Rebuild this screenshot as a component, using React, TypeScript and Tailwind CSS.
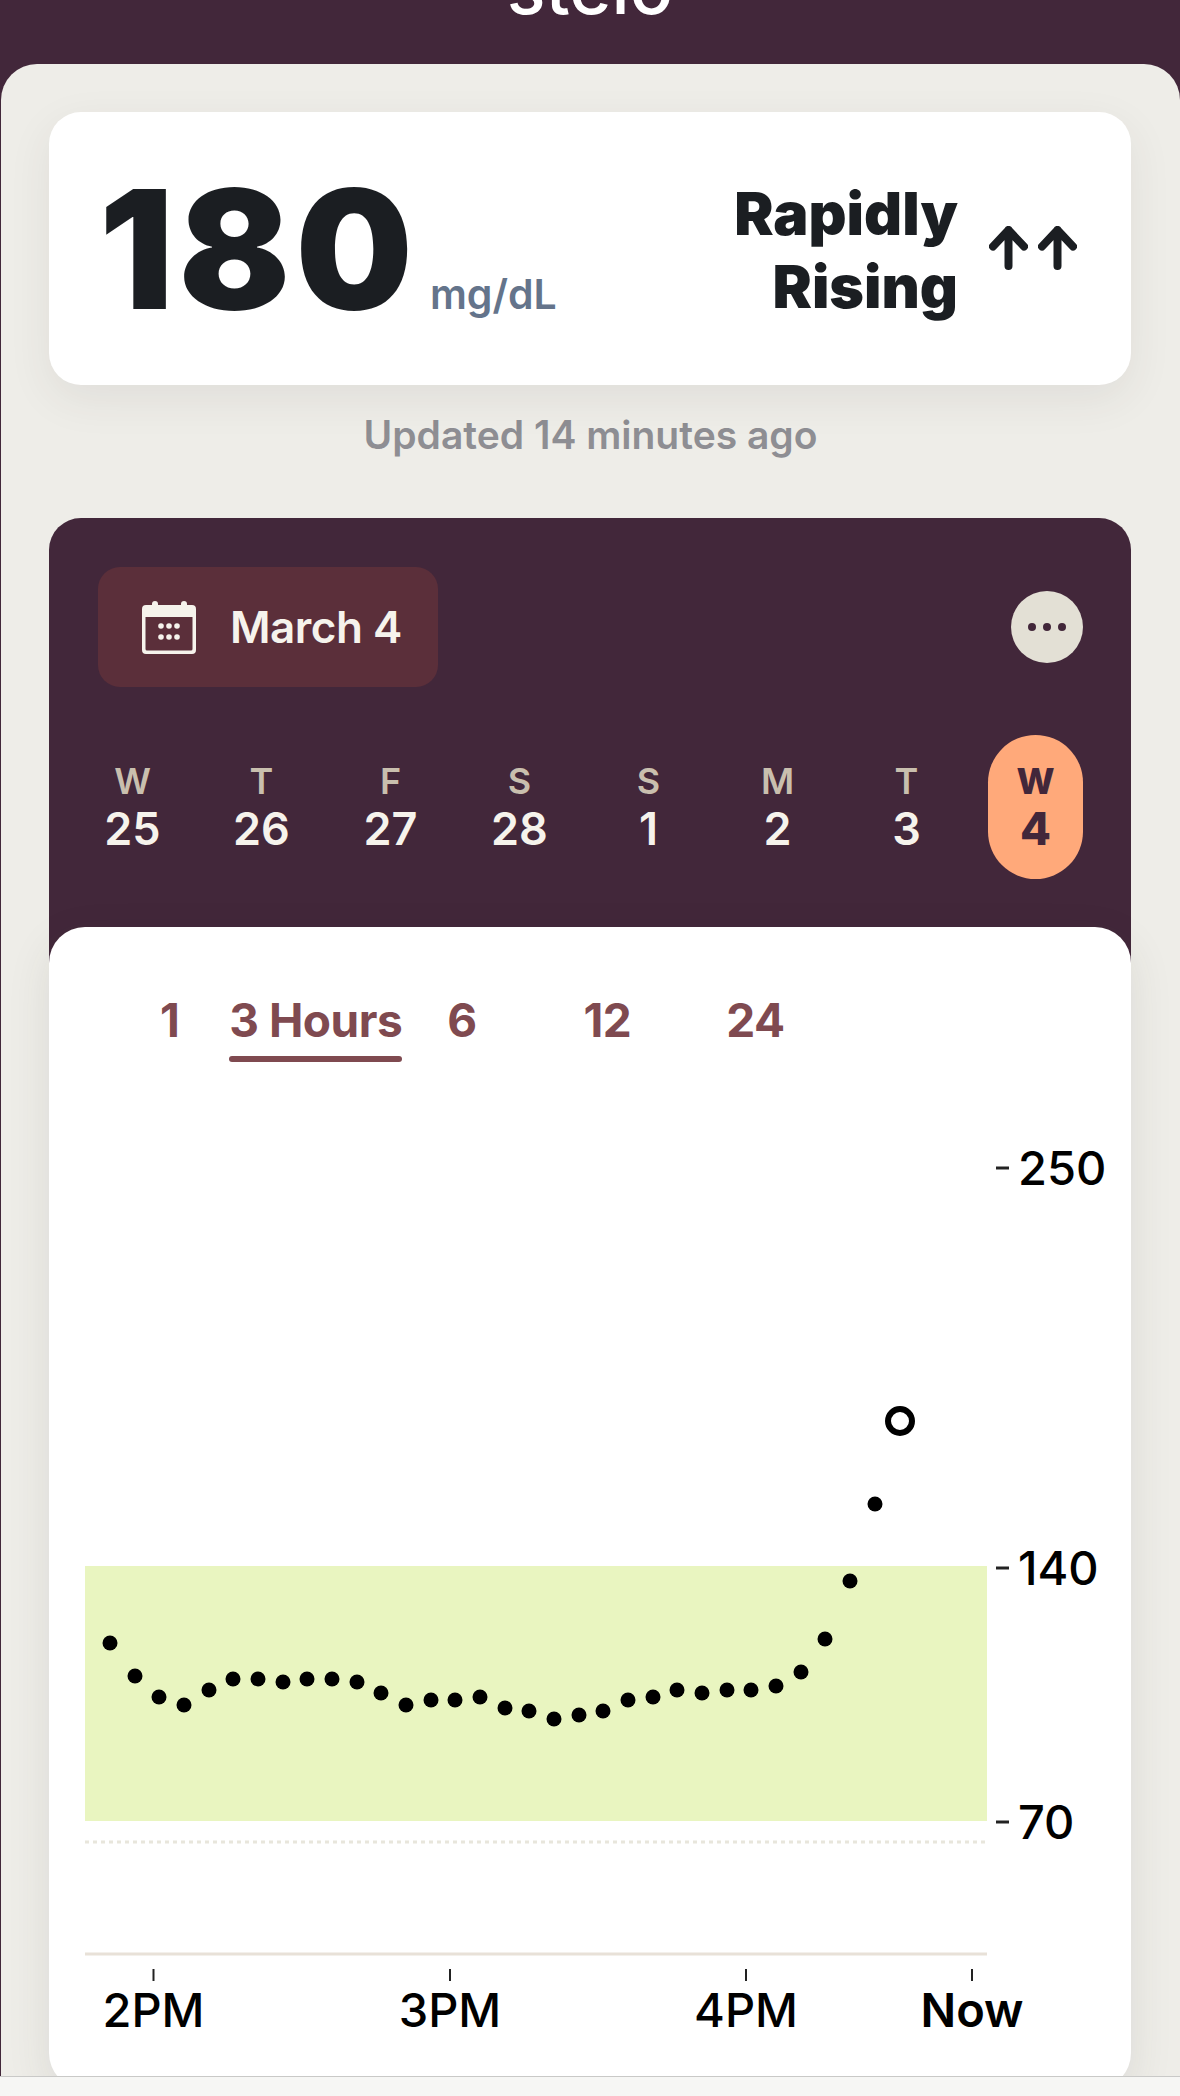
const dots: [number, number][] = [
  [110,1643],[135,1676],[159,1697],[184,1705],[209,1690],[233,1679],[258,1679],[283,1682],[307,1679],[332,1679],[357,1682],[381,1693],[406,1705],[431,1700],[455,1700],[480,1697],[505,1708],[529,1711],[554,1719],[579,1715],[603,1711],[628,1700],[653,1697],[677,1690],[702,1693],[727,1690],[751,1690],[776,1686],[801,1672],[825,1639],[850,1581],[875,1504],
];
const days = [
  ["W","25"],["T","26"],["F","27"],["S","28"],["S","1"],["M","2"],["T","3"],
];
const ORIGIN_X = 49;
const ORIGIN_Y = 1100;
const yLabels: [string, number][] = [["250",1168],["140",1568],["70",1822]];
const xLabels: [string, number, string][] = [["2PM",153.5,"font-medium"],["3PM",450,"font-medium"],["4PM",746,"font-medium"],["Now",972,"font-semibold"]];

function Arrow() {
  return (
    <svg width="39" height="44" viewBox="0 0 39 44" fill="none" stroke="#1b1e22" strokeWidth="8" strokeLinecap="round" strokeLinejoin="round">
      <path d="M19.500 4V40M4 20.500L19.500 4L35 20.500" />
    </svg>
  );
}

export default function App() {
  return (
    <div className="w-[1180px] h-[2096px] overflow-hidden bg-[#42273a] flex flex-col font-['Inter',sans-serif]">
      <header className="h-[64px] shrink-0 relative overflow-hidden">
        <div className="absolute left-0 right-0 bottom-[40px] text-center text-white text-[72px] leading-[72px] font-medium">stelo</div>
      </header>
      <main className="flex-1 min-h-0 ml-[1px] rounded-t-[36px] bg-[#eeede8] px-[48px] pt-[48px] flex flex-col overflow-hidden">
        <section className="h-[273px] w-[1082px] shrink-0 rounded-[32px] bg-white shadow-[0_14px_44px_rgba(60,55,45,0.08)] flex items-start relative">
          <div className="flex items-baseline pl-[50px] pt-[55px]">
            <span className="text-[165px] leading-[165px] font-black text-[#1b1e22] tracking-[5px]">180</span>
            <span className="ml-[12px] text-[41px] leading-none font-semibold text-[#64748b]">mg/dL</span>
          </div>
          <div className="ml-auto flex items-center pr-[54px] pt-[65px]">
            <div className="text-right text-[59px] leading-[73px] font-black text-[#1b1e22]">
              <div>Rapidly</div>
              <div>Rising</div>
            </div>
            <div className="flex ml-[31px] mt-[-4px] gap-[10px]">
              <Arrow />
              <Arrow />
            </div>
          </div>
        </section>
        <p className="mt-[28px] h-[44px] text-center text-[39px] leading-[44px] font-semibold text-[#8e8e93] shrink-0">Updated 14 minutes ago</p>
        <section className="mt-[61px] w-[1082px] shrink-0 flex flex-col">
          <div className="rounded-t-[32px] bg-[#42273a] pb-[84px] flex flex-col">
            <div className="flex items-center justify-between pl-[49px] pr-[48px] pt-[49px] shrink-0">
              <button className="h-[120px] w-[340px] rounded-[22px] bg-[#5b2f3a] flex items-center pl-[44px] text-[#f6f3ec]">
                <svg width="54" height="54" viewBox="0 0 54 54" fill="#f6f3ec">
                  <path fillRule="evenodd" d="M10 4a3 3 0 0 1 6 0v1h23V4a3 3 0 0 1 6 0v1h5a4 4 0 0 1 4 4v41a4 4 0 0 1-4 4H4a4 4 0 0 1-4-4V9a4 4 0 0 1 4-4h6zM3.500 17v32a1.500 1.500 0 0 0 1.500 1.500h44a1.500 1.500 0 0 0 1.500-1.500V17z" />
                  <circle cx="19" cy="26" r="2.800" /><circle cx="27" cy="26" r="2.800" /><circle cx="35" cy="26" r="2.800" />
                  <circle cx="19" cy="37" r="2.800" /><circle cx="27" cy="37" r="2.800" /><circle cx="35" cy="37" r="2.800" />
                </svg>
                <span className="ml-[34px] text-[44px] leading-none font-semibold tracking-[-0.5px]">March 4</span>
              </button>
              <div className="w-[72px] h-[72px] rounded-full bg-[#e3e0d5] flex items-center justify-center gap-[7px]">
                <span className="w-[8px] h-[8px] rounded-full bg-[#42273a]" />
                <span className="w-[8px] h-[8px] rounded-full bg-[#42273a]" />
                <span className="w-[8px] h-[8px] rounded-full bg-[#42273a]" />
              </div>
            </div>
            <div className="flex pl-[19px] mt-[48px] h-[144px] shrink-0">
              {days.map(([d, n], i) => (
                <div key={i} className="w-[129px] flex flex-col items-center pt-[26px]">
                  <span className="text-[36px] leading-[40px] font-semibold text-[#c9bfae]">{d}</span>
                  <span className="text-[45px] leading-[50px] mt-[3px] font-semibold text-[#f6f3ec]">{n}</span>
                </div>
              ))}
              <div className="w-[95px] ml-[17px] rounded-full bg-[#ffa97a] flex flex-col items-center pt-[26px] text-[#42273a]">
                <span className="text-[36px] leading-[40px] font-extrabold">W</span>
                <span className="text-[45px] leading-[50px] mt-[3px] font-extrabold">4</span>
              </div>
            </div>
          </div>
          <div className="relative mt-[-36px] h-[1162px] rounded-[36px] bg-white shadow-[0_14px_44px_rgba(60,55,45,0.1)] flex flex-col">
            <div className="flex items-start pt-[67px] h-[173px] text-[46px] leading-[52px] font-bold text-[#7f4a50] shrink-0 tracking-[-0.5px]">
              <span className="ml-[111px]">1</span>
              <div className="ml-[50px] flex flex-col">
                <span>3 Hours</span>
                <span className="mt-[10px] h-[6px] rounded-full bg-[#7f4a50]" />
              </div>
              <span className="ml-[45px]">6</span>
              <span className="ml-[107px]">12</span>
              <span className="ml-[95px]">24</span>
            </div>
            <div className="relative flex-1">
              <svg className="absolute left-0 top-0" width="1082" height="976" viewBox={`${ORIGIN_X} ${ORIGIN_Y} 1082 976`}>
                <rect x="85" y="1566" width="902" height="255" fill="#e9f5c0" />
                <line x1="85" x2="987" y1="1842" y2="1842" stroke="#e8e6dc" strokeWidth="3" strokeDasharray="4 4" />
                <line x1="85" x2="987" y1="1954" y2="1954" stroke="#e8e1d8" strokeWidth="3" />
                {dots.map(([x, y], i) => (
                  <circle key={i} cx={x} cy={y} r="7.500" fill="#000" />
                ))}
                <circle cx="900" cy="1421" r="12" fill="none" stroke="#000" strokeWidth="6" />
                {yLabels.map(([t, y]) => (
                  <line key={t} x1="996" x2="1009" y1={y} y2={y} stroke="#222" strokeWidth="3" />
                ))}
                {xLabels.map(([t, x]) => (
                  <line key={t} x1={x} x2={x} y1="1969" y2="1981" stroke="#222" strokeWidth="2" />
                ))}
              </svg>
              {yLabels.map(([t, y]) => (
                <span key={t} className="absolute left-[969px] text-[47px] leading-[50px] font-medium text-black" style={{ top: y - ORIGIN_Y - 25 }}>{t}</span>
              ))}
              {xLabels.map(([t, x, w]) => (
                <span key={t} className={`absolute w-[160px] text-center text-[47px] leading-[50px] text-black ${w}`} style={{ top: 2010 - ORIGIN_Y - 25, left: x - ORIGIN_X - 80 }}>{t}</span>
              ))}
            </div>
          </div>
        </section>
      </main>
      <footer className="h-[20px] shrink-0 bg-[#f6f6f4] border-t border-[#c9c9c7]" />
    </div>
  );
}
